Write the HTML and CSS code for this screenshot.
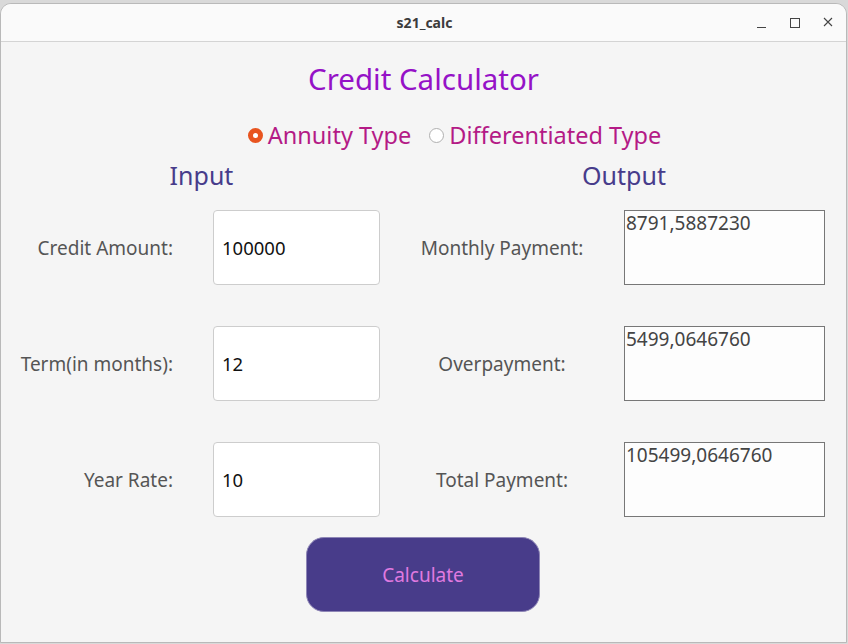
FILE: index.html
```html
<!DOCTYPE html>
<html>
<head>
<meta charset="utf-8">
<link rel="stylesheet" href="styles.css">
</head>
<body>
<div class="window">
  <div class="titlebar">
    <span class="title">s21_calc</span>
    <div class="controls">
      <span class="ctl min"></span>
      <span class="ctl max"></span>
      <span class="ctl close">
        <svg width="10" height="10" viewBox="0 0 10 10"><path d="M1 1L9 9M9 1L1 9" stroke="#444" stroke-width="1.1"/></svg>
      </span>
    </div>
  </div>
  <div class="content">
    <h1 class="heading">Credit Calculator</h1>
    <div class="radios">
      <label class="radio"><span class="dot checked"></span>Annuity Type</label>
      <label class="radio"><span class="dot"></span>Differentiated Type</label>
    </div>
    <div class="heads">
      <div class="head">Input</div>
      <div class="head">Output</div>
    </div>
    <div class="form">
      <div class="lbl lbl-in">Credit Amount:</div>
      <div class="inp">100000</div>
      <div class="lbl lbl-out">Monthly Payment:</div>
      <div class="out">8791,5887230</div>

      <div class="lbl lbl-in">Term(in months):</div>
      <div class="inp">12</div>
      <div class="lbl lbl-out">Overpayment:</div>
      <div class="out">5499,0646760</div>

      <div class="lbl lbl-in">Year Rate:</div>
      <div class="inp">10</div>
      <div class="lbl lbl-out">Total Payment:</div>
      <div class="out">105499,0646760</div>
    </div>
    <div class="actions">
      <button class="calc">Calculate</button>
    </div>
  </div>
</div>
</body>
</html>
```
FILE: styles.css
```css
html, body {
  margin: 0;
  padding: 0;
}
body {
  width: 848px;
  height: 644px;
  background: #d9d9d9;
  font-family: "Noto Sans", "Open Sans", sans-serif;
  overflow: hidden;
}
.window {
  margin-top: 3px;
  width: 845px;
  height: 638px;
  background: #f5f5f5;
  border: 1px solid #b9b9b9;
  border-radius: 11px 11px 0 0;
  overflow: hidden;
  display: flex;
  flex-direction: column;
}
.titlebar {
  height: 37px;
  flex: none;
  background: #fafafa;
  border-bottom: 1px solid #d4d4d4;
  position: relative;
  display: flex;
  align-items: center;
  justify-content: center;
}
.title {
  font-size: 14px;
  font-weight: bold;
  color: #3c3c3c;
  margin-left: 2px;
}
.controls {
  position: absolute;
  right: 12px;
  top: 0;
  height: 37px;
  display: flex;
  align-items: center;
  gap: 22px;
}
.ctl {
  width: 11px;
  height: 11px;
  display: block;
  position: relative;
}
.min::after {
  content: "";
  position: absolute;
  left: 1px;
  right: 1px;
  bottom: 0;
  height: 1px;
  background: #444;
}
.max {
  width: 8px;
  height: 8px;
  border: 1px solid #444;
  margin: 0 1px;
}
.close svg {
  display: block;
}
.content {
  flex: 1;
  padding-top: 19px;
}
.heading {
  margin: 0;
  text-align: center;
  font-weight: normal;
  font-size: 29.5px;
  line-height: 36px;
  color: #9512c7;
}
.radios {
  margin-top: 23px;
  display: flex;
  justify-content: center;
  gap: 18px;
  height: 30px;
  align-items: center;
  padding-left: 62px;
}
.radio {
  display: flex;
  align-items: center;
  font-size: 23.5px;
  color: #b41a86;
}
.dot {
  width: 13px;
  height: 13px;
  border-radius: 50%;
  border: 1px solid #b0b0b0;
  background: #fff;
  margin-right: 5px;
  box-sizing: content-box;
}
.dot.checked {
  width: 5px;
  height: 5px;
  border: 5px solid #e8541f;
  background: #fff;
}
.heads {
  margin-top: 8px;
  display: grid;
  grid-template-columns: 401px 444px;
  height: 30px;
  align-items: center;
}
.head {
  text-align: center;
  font-size: 25px;
  color: #473c8b;
}
.form {
  margin-top: 22px;
  display: grid;
  grid-template-columns: 212px 167px 244px 201px;
  grid-auto-rows: 75px;
  row-gap: 41px;
}
.lbl {
  font-size: 19px;
  color: #555;
  display: flex;
  align-items: center;
}
.lbl-in {
  justify-content: flex-end;
  padding-right: 40px;
}
.lbl-out {
  justify-content: center;
}
.inp {
  background: #fff;
  border: 1px solid #cdcdcd;
  border-radius: 4px;
  font-size: 18.5px;
  color: #111;
  display: flex;
  align-items: center;
  padding-left: 8px;
}
.out {
  background: #fdfdfd;
  border: 1px solid #777;
  font-size: 19px;
  color: #444;
  padding-left: 1px;
  line-height: 24px;
}
.actions {
  margin-top: 20px;
  display: flex;
  padding-left: 305px;
}
.calc {
  width: 234px;
  height: 75px;
  background: #483c8a;
  border: 1px solid #8e86b6;
  border-radius: 18px;
  color: #e07ae0;
  font-family: "Noto Sans", "Open Sans", sans-serif;
  font-size: 19px;
  padding: 0;
}
```
